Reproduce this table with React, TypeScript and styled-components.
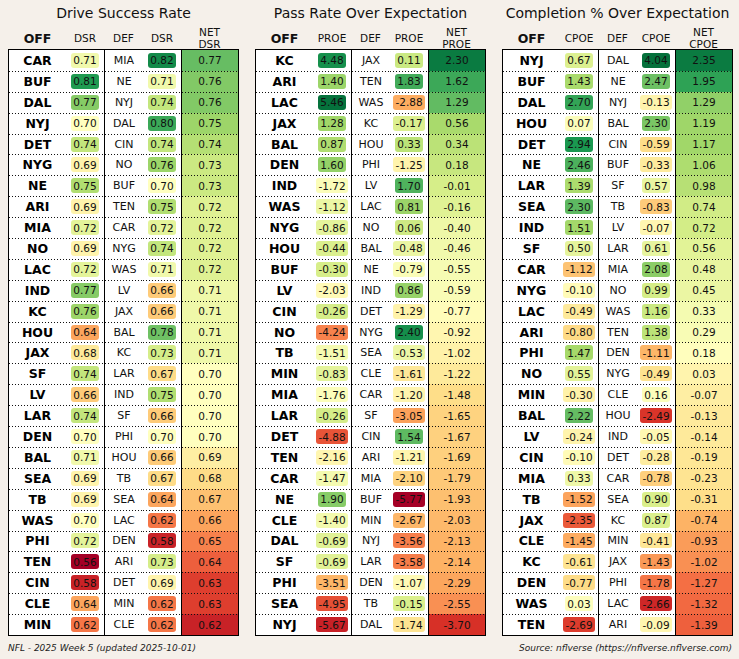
import React from "react";
import styled, { createGlobalStyle } from "styled-components";

const GlobalStyle = createGlobalStyle`
  html, body {
    margin: 0;
    padding: 0;
    background: #f5f0ea;
  }
  body {
    font-family: "DejaVu Sans", Verdana, sans-serif;
    color: #111;
  }
`;

// matplotlib RdYlGn
const RDYLGN = [
  "#a50026", "#d73027", "#f46d43", "#fdae61", "#fee08b", "#ffffbf",
  "#d9ef8b", "#a6d96a", "#66bd63", "#1a9850", "#006837",
];

const toRgb = (h: string) => [1, 3, 5].map(i => parseInt(h.slice(i, i + 2), 16));

function cmap(t: number) {
  const c = Math.max(0, Math.min(1, t)) * 10;
  const i = Math.min(9, Math.floor(c));
  const f = c - i;
  const a = toRgb(RDYLGN[i]);
  const b = toRgb(RDYLGN[i + 1]);
  const rgb = a.map((v, k) => Math.round(v + (b[k] - v) * f));
  return `rgb(${rgb.join(",")})`;
}

// vmin, vcenter, vmax
type Norm = [number, number, number];

function shade(v: number, [lo, c, hi]: Norm) {
  const t = v < c ? 0.5 * (v - lo) / (c - lo) : 0.5 + 0.5 * (v - c) / (hi - c);
  return cmap(t);
}

type Row = [string, number, string, number, number];

interface Board {
  title: string;
  metric: string;
  norms: { off: Norm; def: Norm; net: Norm };
  rows: Row[];
}

const boards: Board[] = [
  {
    title: "Drive Success Rate",
    metric: "DSR",
    norms: { off: [0.56, 0.7, 0.84], def: [0.56, 0.7, 0.84], net: [0.607, 0.7, 0.817] },
    rows: [
      ["CAR", 0.71, "MIA", 0.82, 0.77],
      ["BUF", 0.81, "NE", 0.71, 0.76],
      ["DAL", 0.77, "NYJ", 0.74, 0.76],
      ["NYJ", 0.7, "DAL", 0.8, 0.75],
      ["DET", 0.74, "CIN", 0.74, 0.74],
      ["NYG", 0.69, "NO", 0.76, 0.73],
      ["NE", 0.75, "BUF", 0.7, 0.73],
      ["ARI", 0.69, "TEN", 0.75, 0.72],
      ["MIA", 0.72, "CAR", 0.72, 0.72],
      ["NO", 0.69, "NYG", 0.74, 0.72],
      ["LAC", 0.72, "WAS", 0.71, 0.72],
      ["IND", 0.77, "LV", 0.66, 0.71],
      ["KC", 0.76, "JAX", 0.66, 0.71],
      ["HOU", 0.64, "BAL", 0.78, 0.71],
      ["JAX", 0.68, "KC", 0.73, 0.71],
      ["SF", 0.74, "LAR", 0.67, 0.7],
      ["LV", 0.66, "IND", 0.75, 0.7],
      ["LAR", 0.74, "SF", 0.66, 0.7],
      ["DEN", 0.7, "PHI", 0.7, 0.7],
      ["BAL", 0.71, "HOU", 0.66, 0.69],
      ["SEA", 0.69, "TB", 0.67, 0.68],
      ["TB", 0.69, "SEA", 0.64, 0.67],
      ["WAS", 0.7, "LAC", 0.62, 0.66],
      ["PHI", 0.72, "DEN", 0.58, 0.65],
      ["TEN", 0.56, "ARI", 0.73, 0.64],
      ["CIN", 0.58, "DET", 0.69, 0.63],
      ["CLE", 0.64, "MIN", 0.62, 0.63],
      ["MIN", 0.62, "CLE", 0.62, 0.62],
    ],
  },
  {
    title: "Pass Rate Over Expectation",
    metric: "PROE",
    norms: { off: [-6.28, -1.9, 5.77], def: [-5.77, -0.9, 3.03], net: [-4.45, -0.7, 2.56] },
    rows: [
      ["KC", 4.48, "JAX", 0.11, 2.3],
      ["ARI", 1.4, "TEN", 1.83, 1.62],
      ["LAC", 5.46, "WAS", -2.88, 1.29],
      ["JAX", 1.28, "KC", -0.17, 0.56],
      ["BAL", 0.87, "HOU", 0.33, 0.34],
      ["DEN", 1.6, "PHI", -1.25, 0.18],
      ["IND", -1.72, "LV", 1.7, -0.01],
      ["WAS", -1.12, "LAC", 0.81, -0.16],
      ["NYG", -0.86, "NO", 0.06, -0.4],
      ["HOU", -0.44, "BAL", -0.48, -0.46],
      ["BUF", -0.3, "NE", -0.79, -0.55],
      ["LV", -2.03, "IND", 0.86, -0.59],
      ["CIN", -0.26, "DET", -1.29, -0.77],
      ["NO", -4.24, "NYG", 2.4, -0.92],
      ["TB", -1.51, "SEA", -0.53, -1.02],
      ["MIN", -0.83, "CLE", -1.61, -1.22],
      ["MIA", -1.76, "CAR", -1.2, -1.48],
      ["LAR", -0.26, "SF", -3.05, -1.65],
      ["DET", -4.88, "CIN", 1.54, -1.67],
      ["TEN", -2.16, "ARI", -1.21, -1.69],
      ["CAR", -1.47, "MIA", -2.1, -1.79],
      ["NE", 1.9, "BUF", -5.77, -1.93],
      ["CLE", -1.4, "MIN", -2.67, -2.03],
      ["DAL", -0.69, "NYJ", -3.56, -2.13],
      ["SF", -0.69, "LAR", -3.58, -2.14],
      ["PHI", -3.51, "DEN", -1.07, -2.29],
      ["SEA", -4.95, "TB", -0.15, -2.55],
      ["NYJ", -5.67, "DAL", -1.74, -3.7],
    ],
  },
  {
    title: "Completion % Over Expectation",
    metric: "CPOE",
    norms: { off: [-3.54, 0, 3.68], def: [-3.19, 0.1, 4.2], net: [-2.28, 0.2, 2.54] },
    rows: [
      ["NYJ", 0.67, "DAL", 4.04, 2.35],
      ["BUF", 1.43, "NE", 2.47, 1.95],
      ["DAL", 2.7, "NYJ", -0.13, 1.29],
      ["HOU", 0.07, "BAL", 2.3, 1.19],
      ["DET", 2.94, "CIN", -0.59, 1.17],
      ["NE", 2.46, "BUF", -0.33, 1.06],
      ["LAR", 1.39, "SF", 0.57, 0.98],
      ["SEA", 2.3, "TB", -0.83, 0.74],
      ["IND", 1.51, "LV", -0.07, 0.72],
      ["SF", 0.5, "LAR", 0.61, 0.56],
      ["CAR", -1.12, "MIA", 2.08, 0.48],
      ["NYG", -0.1, "NO", 0.99, 0.45],
      ["LAC", -0.49, "WAS", 1.16, 0.33],
      ["ARI", -0.8, "TEN", 1.38, 0.29],
      ["PHI", 1.47, "DEN", -1.11, 0.18],
      ["NO", 0.55, "NYG", -0.49, 0.03],
      ["MIN", -0.3, "CLE", 0.16, -0.07],
      ["BAL", 2.22, "HOU", -2.49, -0.13],
      ["LV", -0.24, "IND", -0.05, -0.14],
      ["CIN", -0.1, "DET", -0.28, -0.19],
      ["MIA", 0.33, "CAR", -0.78, -0.23],
      ["TB", -1.52, "SEA", 0.9, -0.31],
      ["JAX", -2.35, "KC", 0.87, -0.74],
      ["CLE", -1.45, "MIN", -0.41, -0.93],
      ["KC", -0.61, "JAX", -1.43, -1.02],
      ["DEN", -0.77, "PHI", -1.78, -1.27],
      ["WAS", 0.03, "LAC", -2.66, -1.32],
      ["TEN", -2.69, "ARI", -0.09, -1.39],
    ],
  },
];

const COLS = "57px 38px 39px 38px 1fr";

const Page = styled.div`
  width: 739px;
  height: 659px;
  box-sizing: border-box;
  padding: 0 6px 0 8px;
  display: flex;
  flex-direction: column;
`;

const Panels = styled.div`
  display: flex;
  gap: 16px;
`;

const Panel = styled.section`
  width: 231px;
  display: flex;
  flex-direction: column;
`;

const Title = styled.h2`
  margin: 4px 0 0;
  height: 18px;
  font-size: 14px;
  line-height: 18px;
  font-weight: normal;
  text-align: center;
  color: #111;
  white-space: nowrap;
`;

const HeaderRow = styled.div`
  display: grid;
  grid-template-columns: ${COLS};
  height: 27px;
  box-sizing: border-box;
  padding: 0 1px 4px;
  align-items: end;
`;

const HeadLabel = styled.div<{ $bold?: boolean; $twoLine?: boolean }>`
  text-align: center;
  font-size: ${p => (p.$bold ? "12.5px" : "10.5px")};
  font-weight: ${p => (p.$bold ? "bold" : "normal")};
  line-height: ${p => (p.$twoLine ? "12px" : "13px")};
  margin-bottom: ${p => (p.$twoLine ? "-5px" : "0")};
  white-space: pre-line;
  color: #111;
`;

const Table = styled.div`
  height: 587px;
  box-sizing: border-box;
  border: 1px solid #000;
  background: #fff;
  display: grid;
  grid-template-rows: repeat(28, 1fr);
  position: relative;
`;

const Row = styled.div`
  display: grid;
  grid-template-columns: ${COLS};
  min-height: 0;
`;

const Cell = styled.div<{ $line: boolean; $sep?: boolean; $bg?: string }>`
  display: flex;
  align-items: center;
  justify-content: center;
  min-height: 0;
  background-color: ${p => p.$bg ?? "transparent"};
  background-image: ${p =>
    p.$line
      ? "repeating-linear-gradient(90deg, #111 0 1px, transparent 1px 3px)"
      : "none"};
  background-size: 100% 1px;
  background-repeat: no-repeat;
  background-position: top left;
  border-left: ${p => (p.$sep ? "1px solid #000" : "none")};
`;

const Team = styled.span<{ $off?: boolean }>`
  font-size: ${p => (p.$off ? "12.5px" : "11px")};
  font-weight: ${p => (p.$off ? "bold" : "normal")};
  color: ${p => (p.$off ? "#000" : "#111")};
`;

const Pill = styled.span<{ $bg: string }>`
  display: inline-flex;
  align-items: center;
  justify-content: center;
  height: 15px;
  padding: 0 2.5px;
  border-radius: 3px;
  background: ${p => p.$bg};
  font-size: 10.5px;
  color: #111;
`;

const Value = styled.span`
  font-size: 10.5px;
  color: #111;
`;

const Footer = styled.div`
  display: flex;
  justify-content: space-between;
  margin-top: 5px;
  padding-right: 1px;
  font-size: 9px;
  line-height: 14px;
  font-style: italic;
  color: #222;
`;

const fmt = (v: number) => v.toFixed(2);

function BoardView({ board }: { board: Board }) {
  const { norms } = board;
  return (
    <Panel>
      <Title>{board.title}</Title>
      <HeaderRow>
        <HeadLabel $bold>OFF</HeadLabel>
        <HeadLabel>{board.metric}</HeadLabel>
        <HeadLabel>DEF</HeadLabel>
        <HeadLabel>{board.metric}</HeadLabel>
        <HeadLabel $twoLine>{`NET\n${board.metric}`}</HeadLabel>
      </HeaderRow>
      <Table>
        {board.rows.map(([off, offV, def, defV, net], i) => (
          <Row key={off}>
            <Cell $line={i > 0}>
              <Team $off>{off}</Team>
            </Cell>
            <Cell $line={i > 0}>
              <Pill $bg={shade(offV, norms.off)}>{fmt(offV)}</Pill>
            </Cell>
            <Cell $line={i > 0} $sep>
              <Team>{def}</Team>
            </Cell>
            <Cell $line={i > 0}>
              <Pill $bg={shade(defV, norms.def)}>{fmt(defV)}</Pill>
            </Cell>
            <Cell $line={i > 0} $sep $bg={shade(net, norms.net)}>
              <Value>{fmt(net)}</Value>
            </Cell>
          </Row>
        ))}
      </Table>
    </Panel>
  );
}

export default function App() {
  return (
    <>
      <GlobalStyle />
      <Page>
        <Panels>
          {boards.map(b => (
            <BoardView key={b.metric} board={b} />
          ))}
        </Panels>
        <Footer>
          <span>NFL - 2025 Week 5 (updated 2025-10-01)</span>
          <span>Source: nflverse (https://nflverse.nflverse.com)</span>
        </Footer>
      </Page>
    </>
  );
}
